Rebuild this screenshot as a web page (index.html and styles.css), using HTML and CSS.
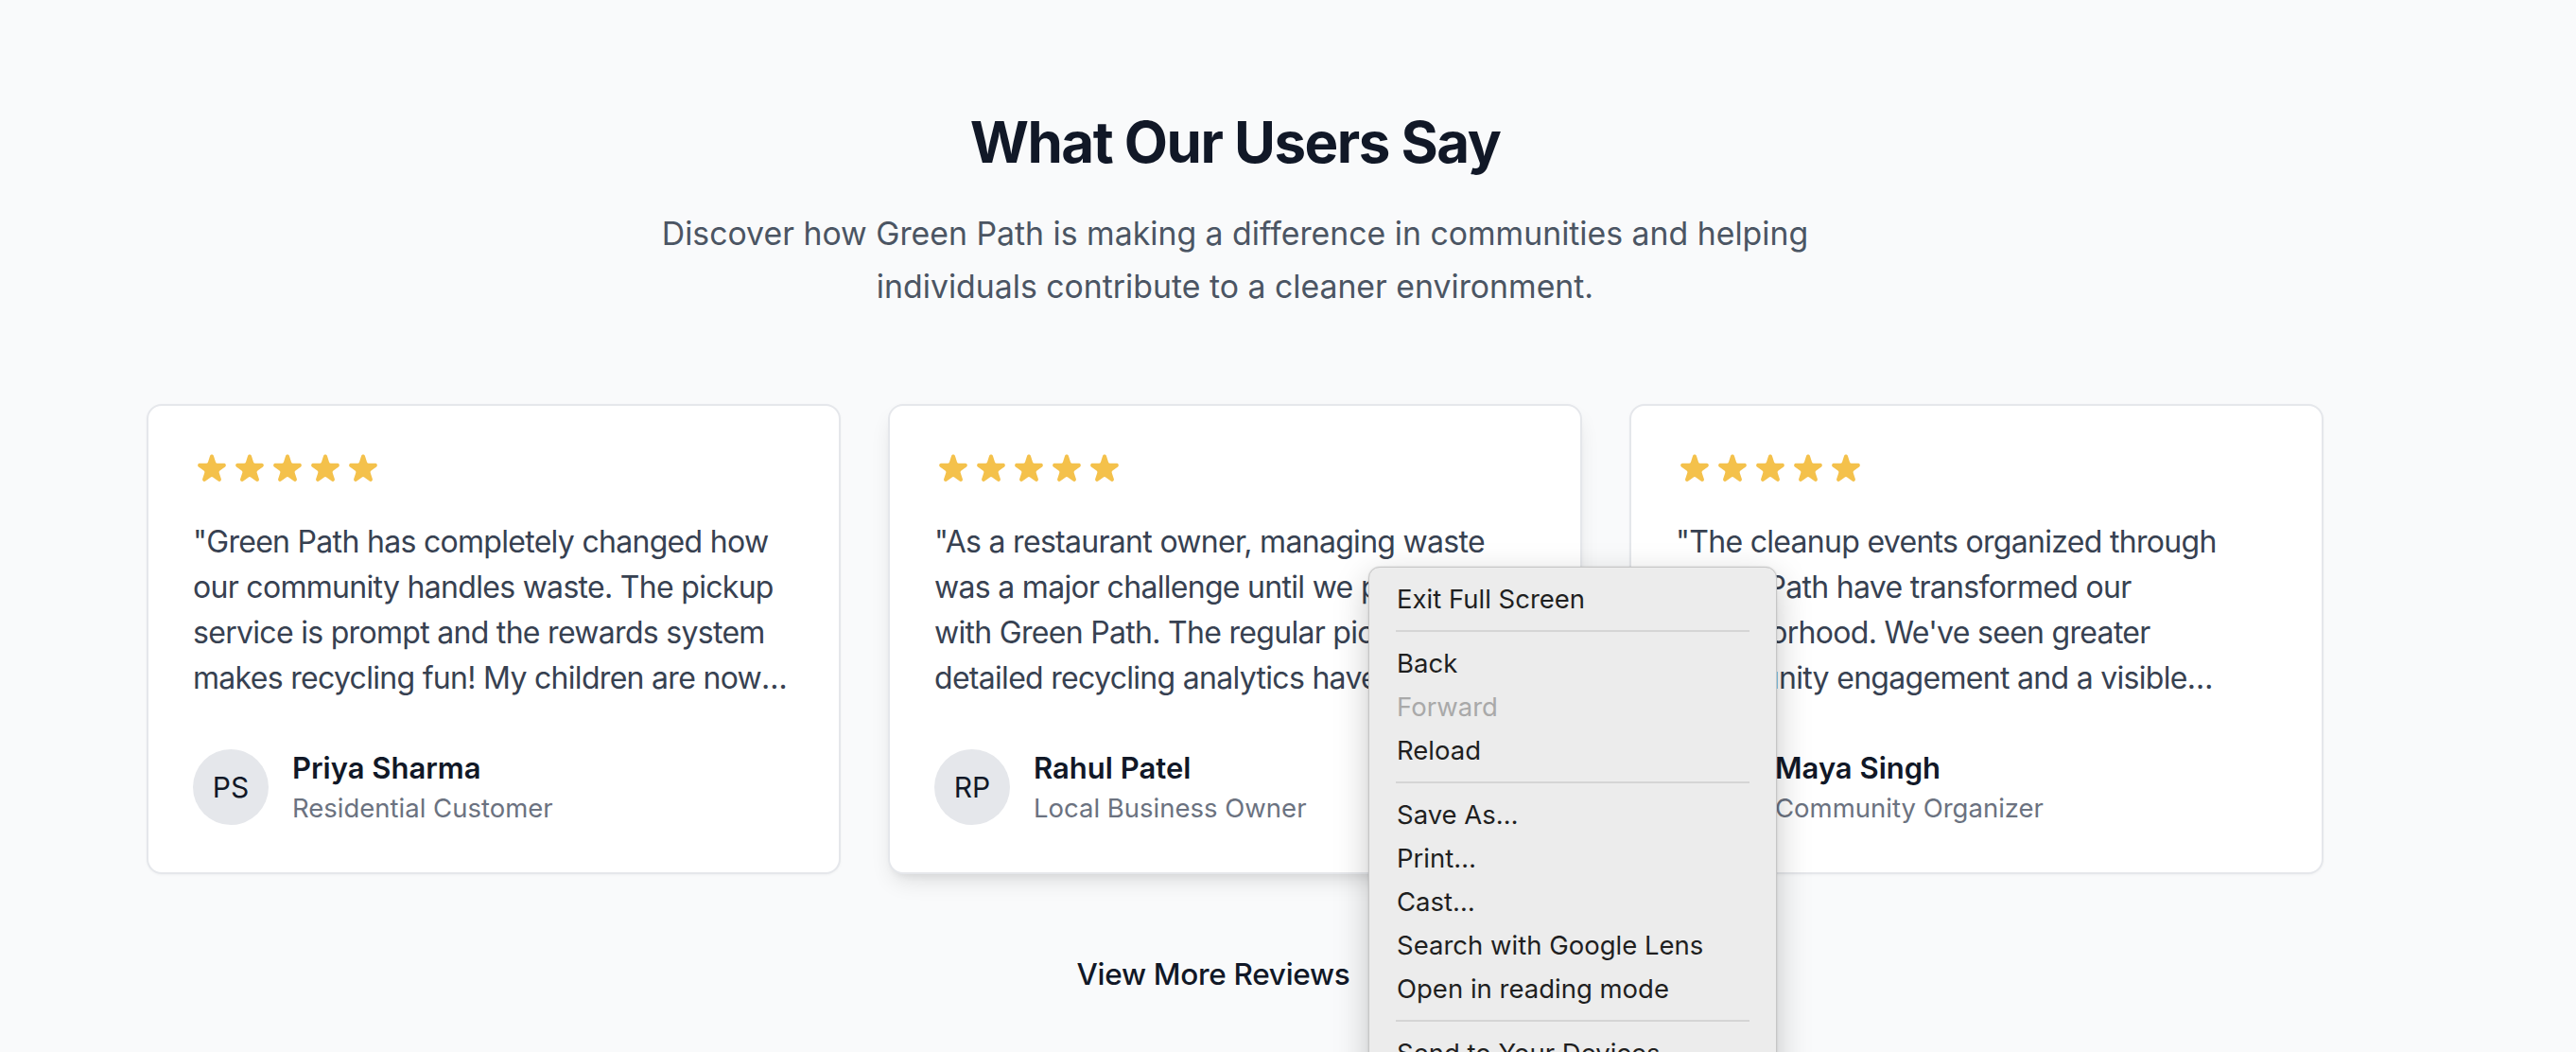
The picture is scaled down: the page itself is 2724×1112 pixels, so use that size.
FILE: index.html
```html
<!DOCTYPE html>
<html lang="en">
<head>
<meta charset="utf-8">
<title>What Our Users Say</title>
<link rel="stylesheet" href="styles.css">
</head>
<body>
<section class="testimonials">
  <h2 class="title">What Our Users Say</h2>
  <p class="subtitle">Discover how Green Path is making a difference in communities and helping individuals contribute to a cleaner environment.</p>

  <div class="cards">
    <article class="card">
      <div class="stars">
        <svg viewBox="0 0 20 20"><path d="M9.049 2.927c.3-.921 1.603-.921 1.902 0l1.07 3.292a1 1 0 00.95.69h3.462c.969 0 1.371 1.24.588 1.81l-2.8 2.034a1 1 0 00-.364 1.118l1.07 3.292c.3.921-.755 1.688-1.540 1.118l-2.8-2.034a1 1 0 00-1.175 0l-2.8 2.034c-.784.57-1.838-.197-1.539-1.118l1.07-3.292a1 1 0 00-.364-1.118L2.98 8.72c-.783-.57-.38-1.81.588-1.81h3.461a1 1 0 00.951-.69l1.07-3.292z"/></svg>
        <svg viewBox="0 0 20 20"><path d="M9.049 2.927c.3-.921 1.603-.921 1.902 0l1.07 3.292a1 1 0 00.95.69h3.462c.969 0 1.371 1.24.588 1.81l-2.8 2.034a1 1 0 00-.364 1.118l1.07 3.292c.3.921-.755 1.688-1.54 1.118l-2.8-2.034a1 1 0 00-1.175 0l-2.8 2.034c-.784.57-1.838-.197-1.539-1.118l1.07-3.292a1 1 0 00-.364-1.118L2.98 8.72c-.783-.57-.38-1.81.588-1.81h3.461a1 1 0 00.951-.69l1.07-3.292z"/></svg>
        <svg viewBox="0 0 20 20"><path d="M9.049 2.927c.3-.921 1.603-.921 1.902 0l1.07 3.292a1 1 0 00.95.69h3.462c.969 0 1.371 1.24.588 1.81l-2.8 2.034a1 1 0 00-.364 1.118l1.07 3.292c.3.921-.755 1.688-1.54 1.118l-2.8-2.034a1 1 0 00-1.175 0l-2.8 2.034c-.784.57-1.838-.197-1.539-1.118l1.07-3.292a1 1 0 00-.364-1.118L2.98 8.72c-.783-.57-.38-1.81.588-1.81h3.461a1 1 0 00.951-.69l1.07-3.292z"/></svg>
        <svg viewBox="0 0 20 20"><path d="M9.049 2.927c.3-.921 1.603-.921 1.902 0l1.07 3.292a1 1 0 00.95.69h3.462c.969 0 1.371 1.24.588 1.81l-2.8 2.034a1 1 0 00-.364 1.118l1.07 3.292c.3.921-.755 1.688-1.54 1.118l-2.8-2.034a1 1 0 00-1.175 0l-2.8 2.034c-.784.57-1.838-.197-1.539-1.118l1.07-3.292a1 1 0 00-.364-1.118L2.98 8.72c-.783-.57-.38-1.81.588-1.81h3.461a1 1 0 00.951-.69l1.07-3.292z"/></svg>
        <svg viewBox="0 0 20 20"><path d="M9.049 2.927c.3-.921 1.603-.921 1.902 0l1.07 3.292a1 1 0 00.95.69h3.462c.969 0 1.371 1.24.588 1.81l-2.8 2.034a1 1 0 00-.364 1.118l1.07 3.292c.3.921-.755 1.688-1.54 1.118l-2.8-2.034a1 1 0 00-1.175 0l-2.8 2.034c-.784.57-1.838-.197-1.539-1.118l1.07-3.292a1 1 0 00-.364-1.118L2.98 8.72c-.783-.57-.38-1.81.588-1.81h3.461a1 1 0 00.951-.69l1.07-3.292z"/></svg>
      </div>
      <p class="quote">"Green Path has completely changed how our community handles waste. The pickup service is prompt and the rewards system makes recycling fun! My children are now excited about sorting our household waste every week."</p>
      <div class="author">
        <div class="avatar">PS</div>
        <div class="who">
          <div class="name">Priya Sharma</div>
          <div class="role">Residential Customer</div>
        </div>
      </div>
    </article>

    <article class="card card-hover">
      <div class="stars">
        <svg viewBox="0 0 20 20"><path d="M9.049 2.927c.3-.921 1.603-.921 1.902 0l1.07 3.292a1 1 0 00.95.69h3.462c.969 0 1.371 1.24.588 1.81l-2.8 2.034a1 1 0 00-.364 1.118l1.07 3.292c.3.921-.755 1.688-1.54 1.118l-2.8-2.034a1 1 0 00-1.175 0l-2.8 2.034c-.784.57-1.838-.197-1.539-1.118l1.07-3.292a1 1 0 00-.364-1.118L2.98 8.72c-.783-.57-.38-1.81.588-1.81h3.461a1 1 0 00.951-.69l1.07-3.292z"/></svg>
        <svg viewBox="0 0 20 20"><path d="M9.049 2.927c.3-.921 1.603-.921 1.902 0l1.07 3.292a1 1 0 00.95.69h3.462c.969 0 1.371 1.24.588 1.81l-2.8 2.034a1 1 0 00-.364 1.118l1.07 3.292c.3.921-.755 1.688-1.54 1.118l-2.8-2.034a1 1 0 00-1.175 0l-2.8 2.034c-.784.57-1.838-.197-1.539-1.118l1.07-3.292a1 1 0 00-.364-1.118L2.98 8.72c-.783-.57-.38-1.81.588-1.81h3.461a1 1 0 00.951-.69l1.07-3.292z"/></svg>
        <svg viewBox="0 0 20 20"><path d="M9.049 2.927c.3-.921 1.603-.921 1.902 0l1.07 3.292a1 1 0 00.95.69h3.462c.969 0 1.371 1.24.588 1.81l-2.8 2.034a1 1 0 00-.364 1.118l1.07 3.292c.3.921-.755 1.688-1.54 1.118l-2.8-2.034a1 1 0 00-1.175 0l-2.8 2.034c-.784.57-1.838-.197-1.539-1.118l1.07-3.292a1 1 0 00-.364-1.118L2.98 8.72c-.783-.57-.38-1.81.588-1.81h3.461a1 1 0 00.951-.69l1.07-3.292z"/></svg>
        <svg viewBox="0 0 20 20"><path d="M9.049 2.927c.3-.921 1.603-.921 1.902 0l1.07 3.292a1 1 0 00.95.69h3.462c.969 0 1.371 1.24.588 1.81l-2.8 2.034a1 1 0 00-.364 1.118l1.07 3.292c.3.921-.755 1.688-1.54 1.118l-2.8-2.034a1 1 0 00-1.175 0l-2.8 2.034c-.784.57-1.838-.197-1.539-1.118l1.07-3.292a1 1 0 00-.364-1.118L2.98 8.72c-.783-.57-.38-1.81.588-1.81h3.461a1 1 0 00.951-.69l1.07-3.292z"/></svg>
        <svg viewBox="0 0 20 20"><path d="M9.049 2.927c.3-.921 1.603-.921 1.902 0l1.07 3.292a1 1 0 00.95.69h3.462c.969 0 1.371 1.24.588 1.81l-2.8 2.034a1 1 0 00-.364 1.118l1.07 3.292c.3.921-.755 1.688-1.54 1.118l-2.8-2.034a1 1 0 00-1.175 0l-2.8 2.034c-.784.57-1.838-.197-1.539-1.118l1.07-3.292a1 1 0 00-.364-1.118L2.98 8.72c-.783-.57-.38-1.81.588-1.81h3.461a1 1 0 00.951-.69l1.07-3.292z"/></svg>
      </div>
      <p class="quote">"As a restaurant owner, managing waste was a major challenge until we partnered with Green Path. The regular pickups and detailed recycling analytics have helped us cut our waste costs and improve our sustainability."</p>
      <div class="author">
        <div class="avatar">RP</div>
        <div class="who">
          <div class="name">Rahul Patel</div>
          <div class="role">Local Business Owner</div>
        </div>
      </div>
    </article>

    <article class="card">
      <div class="stars">
        <svg viewBox="0 0 20 20"><path d="M9.049 2.927c.3-.921 1.603-.921 1.902 0l1.07 3.292a1 1 0 00.95.69h3.462c.969 0 1.371 1.24.588 1.81l-2.8 2.034a1 1 0 00-.364 1.118l1.07 3.292c.3.921-.755 1.688-1.54 1.118l-2.8-2.034a1 1 0 00-1.175 0l-2.8 2.034c-.784.57-1.838-.197-1.539-1.118l1.07-3.292a1 1 0 00-.364-1.118L2.98 8.72c-.783-.57-.38-1.81.588-1.81h3.461a1 1 0 00.951-.69l1.07-3.292z"/></svg>
        <svg viewBox="0 0 20 20"><path d="M9.049 2.927c.3-.921 1.603-.921 1.902 0l1.07 3.292a1 1 0 00.95.69h3.462c.969 0 1.371 1.24.588 1.81l-2.8 2.034a1 1 0 00-.364 1.118l1.07 3.292c.3.921-.755 1.688-1.54 1.118l-2.8-2.034a1 1 0 00-1.175 0l-2.8 2.034c-.784.57-1.838-.197-1.539-1.118l1.07-3.292a1 1 0 00-.364-1.118L2.98 8.72c-.783-.57-.38-1.81.588-1.81h3.461a1 1 0 00.951-.69l1.07-3.292z"/></svg>
        <svg viewBox="0 0 20 20"><path d="M9.049 2.927c.3-.921 1.603-.921 1.902 0l1.07 3.292a1 1 0 00.95.69h3.462c.969 0 1.371 1.24.588 1.81l-2.8 2.034a1 1 0 00-.364 1.118l1.07 3.292c.3.921-.755 1.688-1.54 1.118l-2.8-2.034a1 1 0 00-1.175 0l-2.8 2.034c-.784.57-1.838-.197-1.539-1.118l1.07-3.292a1 1 0 00-.364-1.118L2.98 8.72c-.783-.57-.38-1.81.588-1.81h3.461a1 1 0 00.951-.69l1.07-3.292z"/></svg>
        <svg viewBox="0 0 20 20"><path d="M9.049 2.927c.3-.921 1.603-.921 1.902 0l1.07 3.292a1 1 0 00.95.69h3.462c.969 0 1.371 1.24.588 1.81l-2.8 2.034a1 1 0 00-.364 1.118l1.07 3.292c.3.921-.755 1.688-1.54 1.118l-2.8-2.034a1 1 0 00-1.175 0l-2.8 2.034c-.784.57-1.838-.197-1.539-1.118l1.07-3.292a1 1 0 00-.364-1.118L2.98 8.72c-.783-.57-.38-1.81.588-1.81h3.461a1 1 0 00.951-.69l1.07-3.292z"/></svg>
        <svg viewBox="0 0 20 20"><path d="M9.049 2.927c.3-.921 1.603-.921 1.902 0l1.07 3.292a1 1 0 00.95.69h3.462c.969 0 1.371 1.24.588 1.81l-2.8 2.034a1 1 0 00-.364 1.118l1.07 3.292c.3.921-.755 1.688-1.54 1.118l-2.8-2.034a1 1 0 00-1.175 0l-2.8 2.034c-.784.57-1.838-.197-1.539-1.118l1.07-3.292a1 1 0 00-.364-1.118L2.98 8.72c-.783-.57-.38-1.81.588-1.81h3.461a1 1 0 00.951-.69l1.07-3.292z"/></svg>
      </div>
      <p class="quote">"The cleanup events organized through Green Path have transformed our neighborhood. We've seen greater community engagement and a visible reduction in litter on our streets and parks."</p>
      <div class="author">
        <div class="avatar">MS</div>
        <div class="who">
          <div class="name">Maya Singh</div>
          <div class="role">Community Organizer</div>
        </div>
      </div>
    </article>
  </div>

  <div class="more-wrap">
    <a class="more" href="#">View More Reviews
      <svg class="chev" viewBox="0 0 24 24"><path d="M9 5l7 7-7 7"/></svg>
    </a>
  </div>
</section>

<div class="context-menu">
  <div class="item">Exit Full Screen</div>
  <div class="sep"></div>
  <div class="item">Back</div>
  <div class="item disabled">Forward</div>
  <div class="item">Reload</div>
  <div class="sep"></div>
  <div class="item">Save As…</div>
  <div class="item">Print…</div>
  <div class="item">Cast…</div>
  <div class="item">Search with Google Lens</div>
  <div class="item">Open in reading mode</div>
  <div class="sep"></div>
  <div class="item">Send to Your Devices</div>
</div>
</body>
</html>
```

FILE: styles.css
```css
html, body {
  margin: 0;
  padding: 0;
}

body {
  background: #f9fafb;
  font-family: Inter, "Noto Sans", "Liberation Sans", sans-serif;
  width: 2724px;
  height: 1112px;
  overflow: hidden;
  position: relative;
}

.testimonials {
  width: 2302px;
  margin-left: 155px;
  padding-top: 114px;
  display: flex;
  flex-direction: column;
  align-items: center;
}

.title {
  margin: 0;
  font-size: 60px;
  line-height: 72px;
  font-weight: 700;
  color: #111827;
  letter-spacing: -1.5px;
}

.subtitle {
  margin: 33px 0 0;
  width: 1280px;
  text-align: center;
  font-size: 33.8px;
  line-height: 56px;
  color: #4b5563;
}

.cards {
  margin-top: 96px;
  width: 100%;
  display: grid;
  grid-template-columns: repeat(3, 1fr);
  gap: 50px;
}

.card {
  background: #ffffff;
  border: 2px solid #e5e7eb;
  border-radius: 16px;
  padding: 47px 47px 50px;
  box-shadow: 0 1px 3px rgba(0, 0, 0, 0.04);
}

.card-hover {
  box-shadow: 0 12px 24px -6px rgba(0, 0, 0, 0.12), 0 6px 10px -6px rgba(0, 0, 0, 0.1);
}

.stars {
  display: flex;
  height: 40px;
}

.stars svg {
  width: 40px;
  height: 40px;
  fill: #f4c14b;
}

.quote {
  margin: 33px 0 0;
  font-size: 32px;
  line-height: 48px;
  letter-spacing: -0.7px;
  color: #374151;
  display: -webkit-box;
  -webkit-line-clamp: 4;
  -webkit-box-orient: vertical;
  overflow: hidden;
}

.author {
  margin-top: 51px;
  display: flex;
  align-items: center;
  gap: 25px;
}

.avatar {
  width: 80px;
  height: 80px;
  border-radius: 50%;
  background: #e5e7eb;
  color: #111827;
  font-size: 30px;
  display: flex;
  align-items: center;
  justify-content: center;
  flex-shrink: 0;
}

.name {
  font-size: 31px;
  line-height: 40px;
  font-weight: 600;
  color: #111827;
}

.role {
  margin-top: 4px;
  font-size: 27.5px;
  line-height: 36px;
  color: #6b7280;
}

.more-wrap {
  margin-top: 82px;
}

.more {
  display: flex;
  align-items: center;
  gap: 14px;
  font-size: 31.5px;
  line-height: 48px;
  font-weight: 500;
  letter-spacing: -0.3px;
  color: #111827;
  text-decoration: none;
}

.chev {
  width: 32px;
  height: 32px;
  fill: none;
  stroke: #111827;
  stroke-width: 2;
  stroke-linecap: round;
  stroke-linejoin: round;
}

/* Browser context menu overlay */
.context-menu {
  position: absolute;
  left: 1447px;
  top: 599px;
  width: 432px;
  height: 620px;
  background: #ececec;
  border: 1px solid #c6c6c6;
  border-radius: 12px;
  box-shadow: 0 12px 36px rgba(0, 0, 0, 0.22), 0 0 2px rgba(0, 0, 0, 0.15);
  padding-top: 10px;
  box-sizing: border-box;
  font-family: Inter, "Noto Sans", "Liberation Sans", sans-serif;
}

.item {
  height: 46px;
  line-height: 46px;
  padding-left: 29px;
  font-size: 27.5px;
  color: #1f1f1f;
}

.item.disabled {
  color: #a9a9a9;
}

.sep {
  height: 2px;
  background: #d5d5d5;
  margin: 10px 28px 10px 28px;
}
```
